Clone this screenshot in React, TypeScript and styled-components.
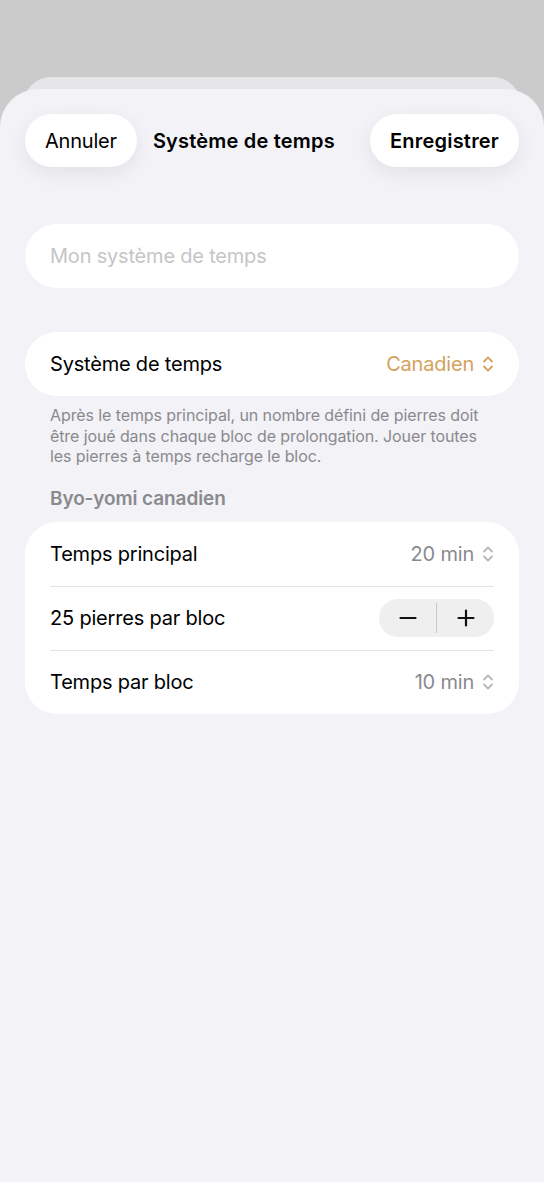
import React, { useState } from "react";
import styled, { createGlobalStyle } from "styled-components";

const GlobalStyle = createGlobalStyle`
  html, body {
    margin: 0;
    padding: 0;
    background: #cbcbcb;
  }
  body {
    font-family: Inter, "Noto Sans", sans-serif;
    -webkit-font-smoothing: antialiased;
  }
`;

const Page = styled.div`
  min-height: 1182px;
  padding-top: 77px;
  box-sizing: border-box;
  display: flex;
  flex-direction: column;
`;

const BackSheet = styled.div`
  flex: 1;
  margin: 0 22px;
  padding-top: 12px;
  background: #e6e6e8;
  border-radius: 30px 30px 0 0;
  display: flex;
  flex-direction: column;
`;

const Sheet = styled.div`
  flex: 1;
  margin: 0 -22px;
  background: #f2f2f7;
  border-radius: 38px 38px 0 0;
  padding: 25px 25px 0;
  display: flex;
  flex-direction: column;
`;

const Header = styled.div`
  display: flex;
  align-items: center;
  gap: 16px;
`;

const PillButton = styled.button<{ $bold?: boolean }>`
  height: 53px;
  padding: 0 20px;
  border: none;
  border-radius: 27px;
  background: #ffffff;
  box-shadow: 0 6px 20px rgba(0, 0, 0, 0.07);
  font-family: inherit;
  font-size: 20px;
  font-weight: ${(p) => (p.$bold ? 600 : 400)};
  color: #000;
  letter-spacing: ${(p) => (p.$bold ? "0.2px" : "-0.2px")};
  margin-left: ${(p) => (p.$bold ? "auto" : "0")};
`;

const Title = styled.div`
  font-size: 20px;
  font-weight: 600;
  color: #000;
  letter-spacing: 0.2px;
`;

const NameInput = styled.input`
  margin-top: 57px;
  height: 64px;
  border: none;
  border-radius: 32px;
  background: #fff;
  padding: 0 25px;
  font-family: inherit;
  font-size: 20px;
  letter-spacing: -0.2px;
  outline: none;
  &::placeholder {
    color: #c5c5c7;
  }
`;

const Card = styled.div<{ $top: number }>`
  margin-top: ${(p) => p.$top}px;
  background: #fff;
  border-radius: 32px;
  padding: 0 25px;
  display: flex;
  flex-direction: column;
`;

const Row = styled.div<{ $divider?: boolean }>`
  height: 64px;
  display: flex;
  align-items: center;
  justify-content: space-between;
  border-top: ${(p) => (p.$divider ? "1px solid #e4e4e6" : "none")};
  box-sizing: border-box;
`;

const Label = styled.span`
  font-size: 20px;
  color: #000;
  letter-spacing: -0.2px;
`;

const Value = styled.span<{ $accent?: boolean }>`
  display: flex;
  align-items: center;
  gap: 8px;
  font-size: 20px;
  letter-spacing: -0.2px;
  color: ${(p) => (p.$accent ? "#d5a25c" : "#8a8a8e")};
`;

const Footnote = styled.p`
  margin: 9px 25px 0;
  font-size: 16px;
  line-height: 20.5px;
  color: #8a8a8e;
  letter-spacing: -0.1px;
`;

const SectionTitle = styled.div`
  margin: 20px 25px 0;
  font-size: 19px;
  font-weight: 600;
  color: #8a8a8e;
  letter-spacing: -0.1px;
`;

const Stepper = styled.div`
  width: 115px;
  height: 38px;
  border-radius: 19px;
  background: #efeff0;
  display: flex;
  align-items: center;
`;

const StepButton = styled.button`
  flex: 1;
  height: 100%;
  border: none;
  background: transparent;
  display: flex;
  align-items: center;
  justify-content: center;
  padding: 0;
`;

const StepDivider = styled.div`
  width: 1px;
  height: 30px;
  background: #c8c8cc;
`;

const Chevrons = ({ color }: { color: string }) => (
  <svg width="12" height="18" viewBox="0 0 12 18" fill="none">
    <path d="M2 6.5L6 2.5L10 6.5" stroke={color} strokeWidth="1.8" strokeLinecap="round" strokeLinejoin="round" />
    <path d="M2 11.5L6 15.5L10 11.5" stroke={color} strokeWidth="1.8" strokeLinecap="round" strokeLinejoin="round" />
  </svg>
);

const Minus = () => (
  <svg width="18" height="18" viewBox="0 0 18 18">
    <path d="M1.5 9H16.5" stroke="#111" strokeWidth="2.2" strokeLinecap="round" />
  </svg>
);

const Plus = () => (
  <svg width="18" height="18" viewBox="0 0 18 18">
    <path d="M1.5 9H16.5M9 1.5V16.5" stroke="#111" strokeWidth="2.2" strokeLinecap="round" />
  </svg>
);

const App = () => {
  const [name, setName] = useState("");
  const [stones, setStones] = useState(25);

  return (
    <>
      <GlobalStyle />
      <Page>
        <BackSheet>
          <Sheet>
            <Header>
              <PillButton>Annuler</PillButton>
              <Title>Système de temps</Title>
              <PillButton $bold>Enregistrer</PillButton>
            </Header>

            <NameInput
              placeholder="Mon système de temps"
              value={name}
              onChange={(e) => setName(e.target.value)}
            />

            <Card $top={44}>
              <Row>
                <Label>Système de temps</Label>
                <Value $accent>
                  Canadien
                  <Chevrons color="#d5a25c" />
                </Value>
              </Row>
            </Card>

            <Footnote>
              Après le temps principal, un nombre défini de pierres doit être joué dans chaque bloc de
              prolongation. Jouer toutes les pierres à temps recharge le bloc.
            </Footnote>

            <SectionTitle>Byo-yomi canadien</SectionTitle>

            <Card $top={12}>
              <Row>
                <Label>Temps principal</Label>
                <Value>
                  20 min
                  <Chevrons color="#b8b8bc" />
                </Value>
              </Row>
              <Row $divider>
                <Label>{stones} pierres par bloc</Label>
                <Stepper>
                  <StepButton onClick={() => setStones((s) => Math.max(1, s - 1))}>
                    <Minus />
                  </StepButton>
                  <StepDivider />
                  <StepButton onClick={() => setStones((s) => s + 1)}>
                    <Plus />
                  </StepButton>
                </Stepper>
              </Row>
              <Row $divider>
                <Label>Temps par bloc</Label>
                <Value>
                  10 min
                  <Chevrons color="#b8b8bc" />
                </Value>
              </Row>
            </Card>
          </Sheet>
        </BackSheet>
      </Page>
    </>
  );
};

export default App;
